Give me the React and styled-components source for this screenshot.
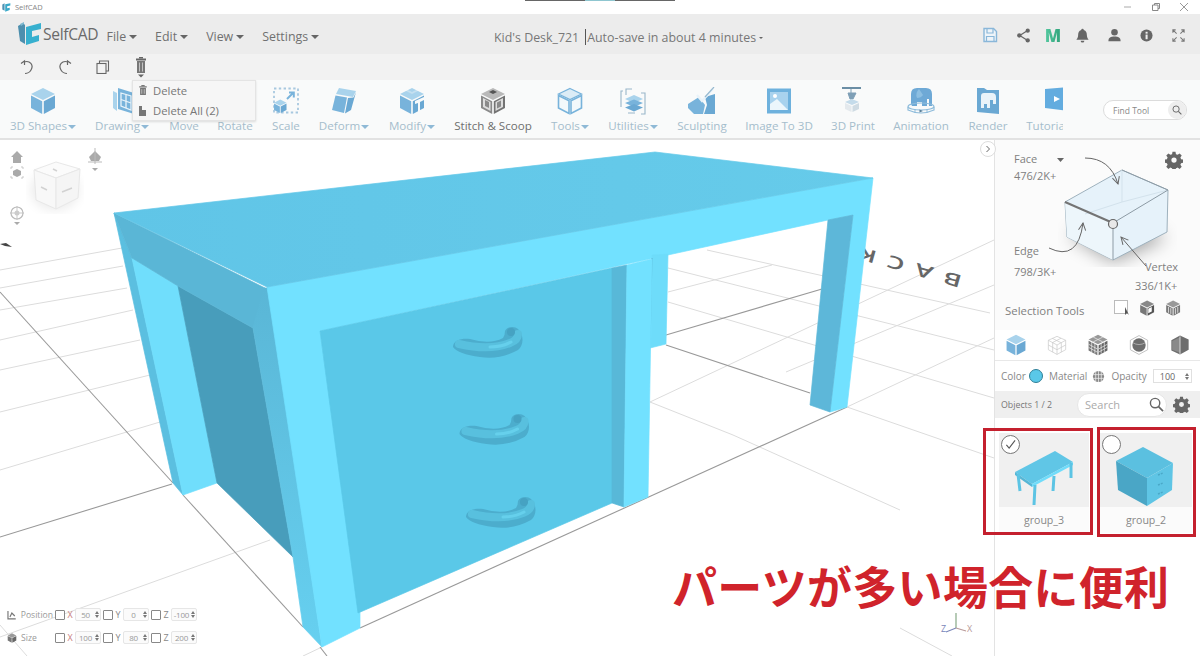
import React from "react";
import styled, { createGlobalStyle } from "styled-components";

const Global = createGlobalStyle`
  html, body { margin: 0; padding: 0; background: #fff; }
  body { font-family: "Open Sans", "Noto Sans", sans-serif; overflow: hidden; }
  #root { width: 1200px; height: 656px; }
  * { box-sizing: border-box; }
`;

const Page = styled.div`
  position: relative; width: 1200px; height: 656px; overflow: hidden;
  display: flex; flex-direction: column; background: #fff; color: #666;
`;
const TitleBar = styled.div`
  position: relative; height: 14px; flex: none; display: flex; align-items: center; padding-left: 2px; gap: 4px; background: #fff;
  &::before { content: ""; position: absolute; left: 525px; top: 0; width: 150px; height: 1px;
    background: linear-gradient(90deg, #666 0 40%, #8fc6d0 40% 60%, #666 60%); }
`;
const WinTitle = styled.span` font-size: 7.5px; color: #888; `;
const WinControls = styled.div` margin-left: auto; display: flex; align-items: center; gap: 18px; padding-right: 11px; `;
const MenuBar = styled.div`
  height: 40px; flex: none; background: #ececec; display: flex; align-items: center; position: relative; padding: 4px 0 0 18px;
`;
const Logo = styled.div` display: flex; align-items: center; gap: 1px; width: 88.500px; font-size: 15.6px; letter-spacing: -0.3px; color: #6a6a6a; margin-top: -4px; `;
const Menu = styled.div` display: flex; gap: 18px; font-size: 12.4px; color: #707070; `;
const MenuItem = styled.span` display: inline-flex; align-items: center; gap: 3px; `;
const Caret = styled.i`
  display: inline-block; width: 0; height: 0; margin-top: 1px;
  border-left: ${p => p.$s || 4}px solid transparent; border-right: ${p => p.$s || 4}px solid transparent;
  border-top: ${p => p.$s || 4}px solid ${p => p.$c || "#666"};
`;
const DocTitle = styled.div`
  position: absolute; left: 494px; top: 3px; height: 40px; display: flex; align-items: center; font-size: 12.4px; color: #777;
`;
const Sep = styled.span` width: 1px; height: 16px; background: #555; margin: 0 1px 0 6px; `;
const HeaderIcons = styled.div`
  position: absolute; left: 974px; top: 1px; height: 40px; display: grid; grid-template-columns: 32px 34px 26px 32px 32px 32px 32px; align-items: center; justify-items: center;
`;
const MLogo = styled.span`
  font-size: 17px; font-weight: 800; line-height: 1; background: linear-gradient(90deg, #55c9a0, #2fa27a); -webkit-background-clip: text; background-clip: text; color: transparent;
`;
const SubBar = styled.div`
  height: 26px; flex: none; background: #f2f2f2; display: grid; grid-template-columns: repeat(4, 38px); align-items: center; justify-items: center; padding-left: 8px; justify-content: start;
`;
const Ribbon = styled.div`
  height: 60px; flex: none; background: #f9fafa; border-bottom: 2px solid #e2e2e2; display: flex; position: relative;
`;
const ToolList = styled.div` width: 1063px; padding-left: 5px; display: flex; overflow: hidden; flex: none; `;
const Tool = styled.div`
  flex: none; width: ${p => p.$w}px; display: flex; flex-direction: column; align-items: center; padding-top: 7px; white-space: nowrap;
`;
const ToolIcon = styled.div` height: 28px; width: 28px; margin-bottom: 4px; margin-left: ${p => p.$shift || 0}px; flex: none; `;
const ToolLabel = styled.div`
  font-size: 11.6px; line-height: 14px; color: ${p => p.$dark ? "#6f6f6f" : "#a5bdcc"}; display: flex; align-items: center; gap: 1px;
`;
const FindTool = styled.div`
  margin: 20px 0 0 40px; width: 84px; height: 20px; border: 1px solid #dcdcdc; border-radius: 10px; background: #fff;
  display: flex; align-items: center; justify-content: space-between; padding: 0 0 0 9px; font-size: 8.5px; color: #888;
`;
const FindBtn = styled.span` width: 18px; height: 18px; border-radius: 50%; background: #eee; display: flex; align-items: center; justify-content: center; `;
const Dropdown = styled.div`
  position: absolute; left: 132px; top: 80px; width: 124px; height: 41px; background: #f6f6f6; border: 1px solid #e4e4e4; box-shadow: 0 1px 2px rgba(0,0,0,.12);
  display: flex; flex-direction: column; justify-content: center; font-size: 11.3px; color: #777; z-index: 3;
`;
const DropItem = styled.div` height: 20.500px; flex: none; display: flex; align-items: center; gap: 5px; padding-left: 5px; `;

const Main = styled.div` flex: 1; display: flex; min-height: 0; `;
const Viewport = styled.div` position: relative; width: 994px; flex: none; background: #fff; `;
const Scene = styled.svg` position: absolute; inset: 0; width: 994px; height: 516px; display: block; `;
const Toggle = styled.div`
  position: absolute; right: -2px; top: 1px; width: 16px; height: 16px; border-radius: 50%; background: #fff; border: 1px solid #ddd; display: flex; align-items: center; justify-content: center;
`;
const NavGizmo = styled.svg` position: absolute; left: 0; top: 0; width: 120px; height: 100px; `;
const Transform = styled.div` position: absolute; left: 7px; bottom: 12px; display: flex; flex-direction: column; gap: 10px; `;
const TransformRow = styled.div` display: flex; height: 13px; align-items: center; gap: 2px; font-size: 8.6px; color: #999; `;
const TransformLabel = styled.div` width: 46px; display: flex; align-items: center; gap: 4px; `;
const Axis = styled.div` display: flex; align-items: center; width: 46px; `;
const Check = styled.span` width: 10px; height: 10px; border: 1px solid #888; border-radius: 1px; background: #fff; flex: none; `;
const AxisName = styled.span` width: 10px; text-align: center; color: ${p => p.$c || "#888"}; flex: none; font-size: 9px; `;
const Spin = styled.div`
  width: 26px; height: 13px; flex: none; border: 1px solid #e6e6e6; border-radius: 2px; background: #fbfbfb; display: flex; align-items: center; padding-right: 1px; font-size: 8px; color: #999; letter-spacing: -0.2px;
`;
const SpinValue = styled.span` flex: 1; text-align: center; `;
const SpinArrows = styled.span`
  display: inline-flex; flex-direction: column; gap: 1px; flex: none;
  &::before, &::after { content: ""; width: 0; height: 0; border-left: 2.5px solid transparent; border-right: 2.5px solid transparent; }
  &::before { border-bottom: 3px solid #777; }
  &::after { border-top: 3px solid #777; }
`;

const Side = styled.aside` flex: 1; border-left: 1px solid #e3e3e3; display: flex; flex-direction: column; background: #fff; `;
const Selection = styled.section` height: 190px; flex: none; background: #fbfbfb; `;
const Diagram = styled.svg` display: block; width: 205px; height: 190px; `;
const ShapeRow = styled.div` height: 31px; flex: none; border-bottom: 1px solid #e8e8e8; display: grid; grid-template-columns: repeat(5, 41px); justify-items: center; align-items: center; `;
const PropRow = styled.div` height: 30px; flex: none; display: flex; align-items: center; padding-left: 6px; font-size: 10px; color: #888; `;
const Swatch = styled.span` width: 14px; height: 14px; border-radius: 50%; background: #5ac8e8; border: 1.5px solid #2f7f97; margin: 0 6px 0 3px; `;
const MaterialIcon = styled.span` display: block; margin: 0 6px 0 5px; `;
const Opacity = styled.div`
  width: 39px; height: 14px; margin-left: 6px; border: 1px solid #e0e0e0; display: flex; align-items: center; justify-content: space-between; padding: 0 2px 0 6px; background: #fff; font-size: 9px; color: #666;
`;
const ObjectsBar = styled.div`
  height: 27px; flex: none; background: #efefef; display: flex; align-items: center; padding-left: 6px; font-size: 8.8px; color: #777;
`;
const SearchPill = styled.div`
  width: 90px; height: 24px; margin-left: 25px; border-radius: 12px; background: #fff; border: 1px solid #e6e6e6; display: flex; align-items: center; justify-content: space-between; padding: 0 2px 0 7px; font-size: 11px; color: #aaa;
`;
const BarGear = styled.span` margin-left: 6px; `;
const Cards = styled.div` display: grid; grid-template-columns: 90px 92px; gap: 11px; padding: 15px 0 0 4px; `;
const Card = styled.div` position: relative; `;
const Thumb = styled.div` height: 74px; background: #f0f0f0; `;
const ThumbArt = styled.svg` display: block; width: 100%; height: 74px; `;
const CardName = styled.div` height: 26px; display: flex; align-items: center; justify-content: center; font-size: 10.6px; color: #888; background: #fbfbfb; `;
const Radio = styled.span`
  position: absolute; left: 2px; top: 2px; width: 19px; height: 19px; border-radius: 50%; background: #fff; border: 1px solid #777; display: flex; align-items: center; justify-content: center;
`;
const Highlight = styled.div`
  position: absolute; left: ${p => p.$x}px; top: ${p => p.$y}px; width: ${p => p.$w}px; height: ${p => p.$h}px; border: 3px solid #c4202e; z-index: 4; pointer-events: none;
`;
const Note = styled.div`
  position: absolute; left: 672px; top: 558px; font-family: "Noto Sans CJK JP", "Noto Sans", sans-serif; font-weight: 700; font-size: 45px; letter-spacing: .3px; line-height: 56px; color: #d0232b; white-space: nowrap; z-index: 4;
`;

/* ---------- tool icons ---------- */
const B1 = "#a9d3ec", B2 = "#78b3db", B3 = "#6aa8d3", G1 = "#b9b9b9", G2 = "#8a8a8a", G3 = "#737373";
const Svg = ({ s = 28, vb = "0 0 28 28", w, children, ...r }) => <svg width={w || s} height={s} viewBox={vb} style={{ display: "block" }} {...r}>{children}</svg>;

const CubeShape = ({ a = B1, b = B2, c = B3 }) => <>
  <polygon points="14,1 26,7 14,13 2,7" fill={a} />
  <polygon points="2,8.5 13.2,14.2 13.2,27 2,21" fill={b} />
  <polygon points="14.8,14.2 26,8.5 26,21 14.8,27" fill={c} />
</>;

const icons = {
  cube: <Svg><CubeShape /></Svg>,
  drawing: <Svg>
    <polygon points="5,4 9,6 9,24 5,21" fill={B1} />
    <polygon points="10,1 26,6 26,27 10,22" fill={B2} />
    <g stroke="#e8f3fa" strokeWidth="1.3" fill="none"><polygon points="13,6 23,9 23,23 13,19" /><line x1="18" y1="7.5" x2="18" y2="21" /><line x1="13" y1="12.5" x2="23" y2="16" /></g>
  </Svg>,
  none: <Svg />,
  scale: <Svg>
    <rect x="2" y="1.5" width="24" height="24" fill="none" stroke="#a8c8df" strokeWidth="1.8" strokeDasharray="2.4 2.4" />
    <g transform="translate(1 12) scale(.52)"><CubeShape /></g>
    <path d="M15 12 L21 6 M17 5.5 H21.8 V10.5" fill="none" stroke="#79b3db" strokeWidth="2" />
  </Svg>,
  deform: <Svg>
    <polygon points="9,1 26,4 23,10 6,7" fill={B1} />
    <polygon points="5.5,8.5 17,10.5 14,26 2,23" fill={B2} />
    <polygon points="18,11 23.5,10.5 26,5 21,23 15,26.5" fill={B3} />
  </Svg>,
  modify: <Svg>
    <CubeShape />
    <polygon points="17,14 26,10 26,13 22,15 22,27 20,27 20,16 17,17" fill="#f9fafa" />
    <polygon points="8,2 14,5 20,2 21,3.5 14,7 7,3.5" fill="#f9fafa" opacity=".35" />
  </Svg>,
  stitch: <Svg>
    <CubeShape a={G1} b={G2} c={G3} />
    <polygon points="4,11 11.5,15 11.5,24 4,20" fill="#ddd" />
    <polygon points="16.5,15 24,11 24,20 16.5,24" fill="#ddd" />
    <polygon points="6,13 10,15 10,21 6,19" fill={G2} />
    <polygon points="18,15.5 22,13.5 22,19.5 18,21.5" fill={G2} />
    <polygon points="14,3 18,5 14,7 10,5" fill="#555" />
  </Svg>,
  tools: <Svg>
    <polygon points="14,1.5 25.5,7 14,12.5 2.5,7" fill="#dcecf6" stroke={B2} strokeWidth="1.2" />
    <polygon points="2.5,8.5 13,13.8 13,26.5 2.5,21" fill="#f3f8fb" stroke={B2} strokeWidth="1.6" />
    <polygon points="15,13.8 25.5,8.5 25.5,21 15,26.5" fill="#f3f8fb" stroke={B2} strokeWidth="1.6" />
  </Svg>,
  utilities: <Svg>
    <path d="M7 8 V2 H13 M22 6 H26 V27 H22 M4 4 H2 V20 M9 26 H16" fill="none" stroke="#9ab6c9" strokeWidth="1.1" />
    <polygon points="15,8 24,12 15,16 6,12" fill={B1} />
    <polygon points="15,12.5 24,16 15,20 6,16" fill={B2} />
    <polygon points="15,17 24,20.5 15,24.5 6,20.5" fill={B3} />
  </Svg>,
  sculpt: <Svg>
    <polygon points="0,17 11,10 17,18 15,27 6,27 0,21" fill={B2} />
    <polygon points="17,10 27,7 27,27 16,27 19,18" fill={B3} />
    <path d="M9 8 L14 14 L25 2" fill="none" stroke="#eaf3f9" strokeWidth="2.4" />
    <path d="M17 10 L26 0" stroke="#97b9cf" strokeWidth="1.2" />
  </Svg>,
  image: <Svg>
    <rect x="2" y="1.5" width="24" height="25" fill="#6eb1dd" />
    <rect x="5" y="5" width="18" height="18" fill="#a8d2ee" />
    <polygon points="5,23 5,17 12,12 23,23" fill="#ecf6fc" />
    <circle cx="10" cy="9" r="2" fill="#fff" />
  </Svg>,
  print: <Svg>
    <rect x="3" y="0" width="19" height="2" fill="#6b8ea5" />
    <path d="M12 2 V6 M9 6 H17 L14 12 H11 Z" fill="#7e9fb6" stroke="#7e9fb6" />
    <polygon points="13,12 20,15 13,18 6,15" fill="#c4dbea" />
    <polygon points="6,16 12.5,19 12.5,25 6,22" fill="#e4e9ed" />
    <polygon points="13.5,19 20,16 20,22 13.5,25" fill="#cfdbe3" />
  </Svg>,
  animation: <Svg>
    <path d="M4 17 V7 Q4 1 10 1 H19 Q25 1 25 7 V19 H22 V12 H20 V19 H15 V15 H10 V19 H5 Z" fill="#6ea9d6" />
    <path d="M12 2 Q8 6 10 11 Q14 11 16 8 Z" fill="#8dbfe2" />
    <ellipse cx="14" cy="19.500" rx="13" ry="3.500" fill="none" stroke="#8fbcdb" strokeWidth="1.200" />
    <path d="M1 20 V23 Q14 29 27 23 V20" fill="none" stroke="#8fbcdb" strokeWidth="1.200" />
    <path d="M8 22 V26 M20 22 V26" stroke="#8fbcdb" />
    <polygon points="12.500,22.500 16,24 12.500,25.500" fill="#5a7f98" />
  </Svg>,
  render: <Svg>
    <polygon points="3,1 10,1 13,3 25,3 25,27 3,25" fill={B3} />
    <path d="M7 17 V9 Q7 6 10 6 H18 Q22 6 22 10 V17 H19 V13 H16 V21 H13 V17 H10 V21 H7 Z" fill="#e9f3f9" />
  </Svg>,
  tutorial: <Svg>
    <polygon points="0,2 24,0 24,24 0,21" fill="#63acdf" />
    <polygon points="9,9 15,12 9,15" fill="#fff" />
  </Svg>,
};

const tools = [
  ["3D Shapes", 76, "cube", 1], ["Drawing", 82, "drawing", 1], ["Move", 42, "none"], ["Rotate", 60, "none"], ["Scale", 42, "scale"],
  ["Deform", 74, "deform", 1], ["Modify", 62, "modify", 1], ["Stitch & Scoop", 100, "stitch", 0, 1], ["Tools", 54, "tools", 1],
  ["Utilities", 72, "utilities", 1], ["Sculpting", 66, "sculpt"], ["Image To 3D", 88, "image"], ["3D Print", 60, "print"],
  ["Animation", 76, "animation"], ["Render", 58, "render"], ["Tutorial", 60, "tutorial", 0, 0, 24],
];

const Trash = ({ s = 12, c = "#777" }) => <Svg s={s} vb="0 0 12 12">
  <rect x="4" y="0" width="4" height="1.5" fill={c} /><rect x="1.5" y="1.5" width="9" height="1.5" fill={c} />
  <path d="M2.5 3.5 H9.5 V12 H2.5 Z" fill={c} /><path d="M4.5 5 V10.5 M7.5 5 V10.5" stroke="#ddd" strokeWidth=".8" />
</Svg>;
const Gear = ({ s = 18, c = "#666" }) => <Svg s={s} vb="0 0 24 24">
  <path fill={c} fillRule="evenodd" d="M10 1 h4 l.6 3.2 a8 8 0 0 1 2.2 .9 l2.7-1.8 2.8 2.8 -1.8 2.7 a8 8 0 0 1 .9 2.2 l3.2 .6 v4 l-3.2 .6 a8 8 0 0 1-.9 2.2 l1.8 2.7 -2.8 2.8 -2.7-1.8 a8 8 0 0 1-2.2 .9 l-.6 3.2 h-4 l-.6-3.2 a8 8 0 0 1-2.2-.9 l-2.7 1.8 -2.8-2.8 1.8-2.7 a8 8 0 0 1-.9-2.2 l-3.2-.6 v-4 l3.2-.6 a8 8 0 0 1 .9-2.2 l-1.8-2.7 2.8-2.8 2.7 1.8 a8 8 0 0 1 2.2-.9z M12 8.5 a3.5 3.5 0 1 0 0 7 a3.5 3.5 0 0 0 0-7z" />
</Svg>;
const Mag = ({ s = 13, c = "#666" }) => <Svg s={s} vb="0 0 16 16"><circle cx="6.5" cy="6.5" r="5" fill="none" stroke={c} strokeWidth="1.5" /><line x1="10.2" y1="10.2" x2="15" y2="15" stroke={c} strokeWidth="1.8" /></Svg>;

/* ---------- scene ---------- */
const light = [
  [0,270,122,248],[0,288,123,266],[0,310,127,288],[0,340,133,310],[0,370,140,340],[0,412,150,375],[0,470,160,422],
  [0,637,270,540],[0,625,27,656],[303,656,322,647],
  [707,250,990,313],[668,268,994,350],[668,302,994,398],[650,402,733,435],[733,435,900,510],[847,407,994,458],
  [668,292,772,265],[650,402,994,240],[786,372,994,285],[847,407,994,338],[900,628,952,656],[350,600,420,570],
];
const dark = [[0,537,172,484],[0,292,173,483],[183,495,303,627],[320,647,327,656],[360,628,847,407],[666,345,810,393],[666,335,822,289]];

const P = ({ points, fill }) => <polygon points={points} fill={fill} stroke={fill} strokeWidth=".7" />;

const handle = (dx, dy, k) => <g key={k} transform={`translate(${dx} ${dy})`}>
  <path d="M453 347 C453 340 462 338 470 339 Q490 345 503 338 Q505 335 505 331 C507 326 515 326 518 329 C524 335 524 345 518 350 Q500 360 480 357 Q458 354 453 347 Z" fill="#4cadcd" />
  <path d="M459 344 Q490 351 510 343 Q518 340 518 334" fill="none" stroke="#58c0de" strokeWidth="8" strokeLinecap="round" />
  <path d="M490 347 Q502 347 511 342" fill="none" stroke="#66d0ec" strokeWidth="3" strokeLinecap="round" />
  <circle cx="511" cy="332" r="4" fill="#46a2c2" />
</g>;

const DeskScene = () => <Scene viewBox="0 140 994 516">
  <defs>
    <linearGradient id="tp" x1="0" x2="1" y1="0" y2="0"><stop offset="0" stopColor="#60c5e7" /><stop offset="1" stopColor="#66cbea" /></linearGradient>
    <linearGradient id="st" x1="0" x2="0" y1="0" y2="1"><stop offset="0" stopColor="#5ab6d6" /><stop offset="1" stopColor="#66d0f0" /></linearGradient>
  </defs>
  {light.map((l, i) => <line key={i} x1={l[0]} y1={l[1]} x2={l[2]} y2={l[3]} stroke="#dcdcdc" strokeWidth="1" />)}
  {dark.map((l, i) => <line key={i} x1={l[0]} y1={l[1]} x2={l[2]} y2={l[3]} stroke="#999" strokeWidth="1.1" />)}
  <path d="M0 244 L6 243 L12 247 L5 246Z" fill="#444" />
  <text transform="translate(963 276) rotate(196) scale(1.15 .72)" fontFamily="Open Sans" fontWeight="600" fontSize="24" letterSpacing="10" fill="#666">BACK</text>

  <P points="114,213 132,258 183,495 173,483" fill="#5bbfe0" />
  <P points="132,258 178,286 217,483 183,495" fill="#70defc" />
  <P points="178,286 253,328 293,557 217,483" fill="#489dbb" />
  <P points="114,213 265,288 272,345 253,328 178,286 132,258" fill="#5ab6d6" />
  <P points="264,288 269,288 322,647 303,627 293,557 253,328" fill="url(#st)" />

  <P points="267,287 873,178 847,407 830,412 853,215 828,220 320,331 360,613 360,628 322,647" fill="#72e1ff" />
  <P points="828,220 853,215 830,412 810,405" fill="#5db7d9" />
  <P points="652,255 668,254 666,344 650,348" fill="#6edcfa" />
  <line x1="652" y1="258" x2="650" y2="348" stroke="#58b6d4" strokeWidth="1" />
  <P points="114,213 655,152 873,178 267,287" fill="url(#tp)" />
  <P points="320,331 612,268 612,503 358,613" fill="#5ac8e8" />
  <P points="612,268 627,265 624,507 612,503" fill="#58b8d8" />
  <P points="627,265 652,259 648,497 624,507" fill="#72e1ff" />
  {handle(0, 0, "a")}{handle(6.5, 87, "b")}{handle(13, 170, "c")}
  <g fontFamily="Open Sans" fontSize="9">
    <g transform="translate(944 628)" strokeWidth="1.1" fill="none">
      <line x1="12" y1="0" x2="12" y2="-15" stroke="#7ba07b" />
      <line x1="12" y1="0" x2="2" y2="4" stroke="#7a86b8" />
      <line x1="12" y1="0" x2="22" y2="3" stroke="#b89a9a" />
    </g>
    <text x="941" y="632" fill="#7a86b8">Z</text><text x="967" y="632" fill="#b89a9a">X</text>
  </g>
</Scene>;

const Gizmo = () => <NavGizmo viewBox="0 0 120 100">
  <defs><filter id="bl"><feGaussianBlur stdDeviation="6" /></filter></defs>
  <ellipse cx="55" cy="50" rx="24" ry="20" fill="#000" opacity=".08" filter="url(#bl)" />
  <polygon points="34,30 56,22 80,29 56,38" fill="#fbfbfb" stroke="#e8e8e8" />
  <polygon points="34,30 56,38 56,69 36,60" fill="#f8f8f8" stroke="#e8e8e8" />
  <polygon points="56,38 80,29 78,58 56,69" fill="#f5f5f5" stroke="#e8e8e8" />
  <path d="M41 47 L47 50 M62 52 L72 48 M53 29 L57 31" stroke="#d2d2d2" strokeWidth="1.5" />
  <path d="M17 11 L11 17 H13 V23 H21 V17 H23 Z" fill="#aaa" />
  <path d="M11 29 V27 H13 M21 27 H23 V29 M23 36 V38 H21 M13 38 H11 V36" fill="none" stroke="#bbb" strokeWidth=".8" />
  <polygon points="17,29 21,31 21,35 17,37 13,35 13,31" fill="#aaa" />
  <polygon points="95,11 101,17 99,21 91,21 89,17" fill="#aaa" /><path d="M95 8 V24 M88 22 L102 22" stroke="#bbb" />
  <polygon points="92,28 98,28 95,31" fill="#aaa" />
  <circle cx="17" cy="73" r="6" fill="none" stroke="#bbb" strokeWidth="1.2" /><path d="M17 66 V80 M10 73 H24" stroke="#bbb" strokeWidth=".8" /><circle cx="17" cy="73" r="2.5" fill="#ccc" />
  <polygon points="14,82 20,82 17,85" fill="#aaa" />
</NavGizmo>;

const SelDiagram = () => <Diagram viewBox="995 140 205 190">
  <defs>
    <filter id="bs"><feGaussianBlur stdDeviation="9" /></filter>
    <marker id="ah" viewBox="0 0 10 10" refX="9" refY="5" markerWidth="9" markerHeight="9" orient="auto"><path d="M1 1 L9 5 L1 9" fill="none" stroke="#666" strokeWidth="1.1" /></marker>
  </defs>
  <polygon points="1068,235 1113,262 1167,238 1120,215" fill="#000" opacity=".35" filter="url(#bs)" />
  <polygon points="1065,202 1122,170 1168,190 1167,232 1113,260 1067,237" fill="#e6f2fa" stroke="#9eb1bd" />
  <polygon points="1065,202 1113,223 1113,260 1067,237" fill="#edf6fb" />
  <path d="M1122 170 V202 M1122 202 L1168 190 M1122 202 L1085 214" stroke="#d3e2ec" fill="none" />
  <path d="M1122 170 L1168 190 L1113 223 M1113 223 V260" stroke="#8d9ba5" fill="none" />
  <line x1="1065" y1="202" x2="1113" y2="223" stroke="#747474" strokeWidth="2" />
  <circle cx="1113" cy="224" r="4.5" fill="#e8e8e8" stroke="#666" strokeWidth="1.2" />
  <path d="M1085 158 Q1110 158 1118 184" stroke="#666" fill="none" markerEnd="url(#ah)" />
  <path d="M1049 248 Q1078 262 1083 223" stroke="#666" fill="none" markerEnd="url(#ah)" />
  <path d="M1146 266 L1121 237" stroke="#666" fill="none" markerEnd="url(#ah)" />
  <g fontFamily="Open Sans" fontSize="11" fill="#808080">
    <text x="1014" y="163">Face</text><text x="1014" y="180">476/2K+</text>
    <text x="1014" y="255">Edge</text><text x="1014" y="276">798/3K+</text>
    <text x="1145" y="271">Vertex</text><text x="1135" y="290">336/1K+</text>
    <text x="1005" y="315" fontSize="11.4">Selection Tools</text>
  </g>
  <polygon points="1057,158 1064,158 1060.5,162" fill="#666" />
  <g transform="translate(1165 151)"><Gear /></g>
  <rect x="1114.5" y="300.5" width="13" height="13" fill="#fff" stroke="#bbb" />
  <path d="M1125 307 L1125 315 L1127 313 L1129 315 Z" fill="#555" />
  <g transform="translate(1139 300) scale(.58)"><CubeShape a="#888" b="#777" c="#555" /><polygon points="16,15 22,12 22,20 16,23" fill="#fff" /></g>
  <g transform="translate(1165 300) scale(.58)"><CubeShape a="#999" b="#777" c="#777" /><path d="M6 12 V22 M10 14 V24 M18 14 V24 M22 12 V22" stroke="#fff" strokeWidth="1.2" /></g>
</Diagram>;

const shapeIcons = [
  <CubeShape />,
  <g fill="none" stroke="#c9c9c9" strokeWidth=".9"><polygon points="14,3 25,8 25,20 14,26 3,20 3,8" /><path d="M3 8 L14 14 L25 8 M14 14 V26 M8 5.5 L19 11 M19 5.5 L8 11 M3 14 L14 20 L25 14 M8.500 11 V23 M19.500 11 V23" /></g>,
  <><CubeShape a="#999" b="#777" c="#666" /><g stroke="#eee" strokeWidth=".9" fill="none"><path d="M6 10 V23 M10 12 V25 M18 12 V25 M22 10 V23 M2 13 L13 19 M2 17 L13 23 M15 19 L26 13 M15 23 L26 17 M8 4 L20 10 M20 4 L8 10" /></g></>,
  <><polygon points="14,2 25,8 25,20 14,26 3,20 3,8" fill="none" stroke="#aaa" strokeWidth=".9" /><circle cx="14" cy="14" r="8.5" fill="#6d6d6d" /><path d="M6 11 Q14 16 22 11" stroke="#ddd" fill="none" strokeWidth=".7" /></>,
  <><polygon points="14,2 25,7 25,20 14,26 3,21 3,8" fill="#6e6e6e" /><polygon points="14,4 14,24 4,20 4,9" fill="#8a8a8a" /><path d="M14 3 V26" stroke="#eee" strokeWidth="1" /></>,
];

const axes = (a, b, c) => [["X", a, "#c98080"], ["Y", b, "#888"], ["Z", c, "#888"]];

const TRow = ({ icon, label, vals }) => <TransformRow>
  <TransformLabel>{icon}{label}</TransformLabel>
  {vals.map(([n, v, col]) => <Axis key={n}><Check /><AxisName $c={col}>{n}</AxisName><Spin><SpinValue>{v}</SpinValue><SpinArrows /></Spin></Axis>)}
</TransformRow>;

export default function App() {
  return <>
    <Global />
    <Page>
      <TitleBar>
        <Svg s={9} vb="0 0 28 28"><polygon points="1,5 8,1 8,24 1,20" fill="#4e93b4" /><path d="M10 4 L26 1 V8 L16 10 V16 L24 15 V22 L10 27 Z" fill="#39a9c9" /></Svg>
        <WinTitle>SelfCAD</WinTitle>
        <WinControls>
          <Svg s={10} vb="0 0 10 10"><line x1="1" y1="5" x2="8" y2="5" stroke="#aaa" /></Svg>
          <Svg s={10} vb="0 0 10 10"><path d="M1.500 3 H7 V8.500 H1.500Z M3.500 3 V1.500 H8.500 V6.500 H7" fill="none" stroke="#888" /></Svg>
          <Svg s={10} vb="0 0 10 10"><path d="M1 1 L9 9 M9 1 L1 9" stroke="#999" /></Svg>
        </WinControls>
      </TitleBar>
      <MenuBar>
        <Logo>
          <Svg s={24} vb="0 0 24 24">
            <polygon points="0,4 5,1 7,3 7,22 2,19" fill="#4d8fae" />
            <polygon points="2,2 6,0 6,2 3,4" fill="#7fb9d0" />
            <path d="M8 5 L23 1 V7 L14 9 V15 L21 13 V19 L8 23 Z" fill="#37b0cf" />
          </Svg>
          SelfCAD
        </Logo>
        <Menu>
          {["File", "Edit", "View", "Settings"].map(m => <MenuItem key={m}>{m}<Caret /></MenuItem>)}
        </Menu>
        <DocTitle>Kid's Desk_721<Sep />Auto-save in about 4 minutes&nbsp;<Caret $s={2.5} /></DocTitle>
        <HeaderIcons>
          <Svg s={16} vb="0 0 16 16"><path d="M2 1.500 H11.500 L14.500 4.500 V14.500 H2 Z" fill="#eef4f9" stroke="#8ab7d9" strokeWidth="1.4" /><path d="M5 2 V6 H11 V2 M4.500 14 V9.500 H12 V14" fill="none" stroke="#8ab7d9" strokeWidth="1.2" /></Svg>
          <Svg s={15} vb="0 0 16 16"><path d="M12 3 L4 8 L12 13" stroke="#666" strokeWidth="1.3" fill="none" /><circle cx="12.500" cy="2.800" r="2.300" fill="#666" /><circle cx="3.500" cy="8" r="2.300" fill="#666" /><circle cx="12.500" cy="13.200" r="2.300" fill="#666" /></Svg>
          <MLogo>M</MLogo>
          <Svg s={15} vb="0 0 16 16"><path d="M8 .8 a1.300 1.300 0 0 1 1.300 1.400 C12 3 12.600 5 12.700 8 C12.800 10.500 14 11.500 14.500 12.500 H1.500 C2 11.500 3.200 10.500 3.300 8 C3.400 5 4 3 6.700 2.200 A1.300 1.300 0 0 1 8 .8z M6 13.500 H10 A2 2 0 0 1 6 13.500z" fill="#666" /></Svg>
          <Svg s={15} vb="0 0 16 16"><circle cx="8" cy="4.500" r="3.500" fill="#666" /><path d="M1.500 14 C1.500 10 4 9 8 9 C12 9 14.500 10 14.500 14Z" fill="#666" /></Svg>
          <Svg s={13} vb="0 0 14 14"><circle cx="7" cy="7" r="6.500" fill="#666" /><rect x="6" y="6" width="2.200" height="5" fill="#eee" /><rect x="6" y="3" width="2.200" height="2" fill="#eee" /></Svg>
          <Svg s={15} vb="0 0 16 16"><g stroke="#777" strokeWidth="1.1" fill="none"><path d="M6 6 L2 2 M2 5 V2 H5 M10 6 L14 2 M11 2 H14 V5 M6 10 L2 14 M2 11 V14 H5 M10 10 L14 14 M11 14 H14 V11" /></g></Svg>
        </HeaderIcons>
      </MenuBar>
      <SubBar>
        <Svg s={16} vb="0 0 16 16"><path d="M5 3 C11 1 15 6 12 11 C11 13 8 14.500 6 14.500 M2 4.500 L5.500 2 L5.500 6" fill="none" stroke="#666" strokeWidth="1.200" /></Svg>
        <Svg s={16} vb="0 0 16 16"><path d="M11 3 C5 1 1 6 4 11 C5 13 8 14.500 10 14.500 M14 4.500 L10.500 2 L10.500 6" fill="none" stroke="#666" strokeWidth="1.200" /></Svg>
        <Svg s={14} vb="0 0 14 14"><rect x="1" y="3.500" width="9" height="10" fill="#f2f2f2" stroke="#666" strokeWidth="1.100" /><path d="M3.500 3.500 V1 H12.500 V11 H10" fill="none" stroke="#666" strokeWidth="1.100" /></Svg>
        <Svg s={21} w={12} vb="0 0 12 21">
          <rect x="4" y="0" width="4" height="1.500" fill="#666" /><rect x="1" y="1.500" width="10" height="2" fill="#666" />
          <path d="M2 4 H10 V16 H2 Z" fill="#777" /><path d="M4.500 5.500 V14.500 M7.500 5.500 V14.500" stroke="#ccc" strokeWidth=".9" />
          <polygon points="3,17.500 9,17.500 6,20.500" fill="#666" />
        </Svg>
      </SubBar>
      <Ribbon>
        <ToolList>
          {tools.map(([name, w, ic, caret, dk, shift]) => <Tool key={name} $w={w}>
            <ToolIcon $shift={shift}>{icons[ic]}</ToolIcon>
            <ToolLabel $dark={dk}>{name}{caret ? <Caret $c="#8fb9d6" /> : null}</ToolLabel>
          </Tool>)}
        </ToolList>
        <FindTool>Find Tool<FindBtn><Mag s={10} /></FindBtn></FindTool>
      </Ribbon>
      <Dropdown>
        <DropItem><Trash s={10} />Delete</DropItem>
        <DropItem><Svg s={10} vb="0 0 10 10"><path d="M1 0 H4 V4 H8 V10 H1Z" fill="#777" /></Svg>Delete All (2)</DropItem>
      </Dropdown>
      <Main>
        <Viewport>
          <DeskScene />
          <Gizmo />
          <Toggle><Svg s={8} vb="0 0 8 8"><path d="M2.500 1 L5.500 4 L2.500 7" fill="none" stroke="#666" strokeWidth="1" /></Svg></Toggle>
          <Transform>
            <TRow label="Position" icon={<Svg s={10} vb="0 0 10 10"><path d="M1 1 V9 H9 M3 7 L5 3 L8 6" fill="none" stroke="#777" strokeWidth="1.200" /></Svg>} vals={axes("50", "0", "-100")} />
            <TRow label="Size" icon={<Svg s={10} vb="0 0 28 28"><CubeShape a="#999" b="#777" c="#666" /></Svg>} vals={axes("100", "80", "200")} />
          </Transform>
        </Viewport>
        <Side>
          <Selection><SelDiagram /></Selection>
          <ShapeRow>{shapeIcons.map((s, i) => <Svg key={i} s={22}>{s}</Svg>)}</ShapeRow>
          <PropRow>
            Color<Swatch />Material
            <MaterialIcon><Svg s={13} vb="0 0 14 14"><circle cx="7" cy="7" r="6" fill="#888" /><path d="M1 5 H13 M1 9 H13 M4 1.500 V12.500 M10 1.500 V12.500 M7 1 V13" stroke="#eee" strokeWidth=".8" /></Svg></MaterialIcon>
            Opacity<Opacity>100<SpinArrows /></Opacity>
          </PropRow>
          <ObjectsBar>
            Objects 1 / 2
            <SearchPill>Search<Mag s={15} /></SearchPill>
            <BarGear><Gear s={17} /></BarGear>
          </ObjectsBar>
          <Cards>
            <Card>
              <Thumb><ThumbArt viewBox="999 433 90 74">
                <polygon points="1015,472 1055,451 1073,462 1032,484" fill="#60c6e6" />
                <polygon points="1015,472 1032,484 1032,487 1015,475" fill="#56b6d5" />
                <polygon points="1032,484 1073,462 1073,465 1032,487" fill="#70dcfa" />
                <path d="M1018 474 L1020 491 M1035 485 L1034 505 M1054 476 L1053 491 M1071 463 L1071 478" stroke="#5cc4e4" strokeWidth="3" />
              </ThumbArt></Thumb>
              <CardName>group_3</CardName>
              <Radio><Svg s={11} vb="0 0 12 12"><path d="M1.500 6.500 L4.500 10 L11 1.500" fill="none" stroke="#555" strokeWidth="1.200" /></Svg></Radio>
            </Card>
            <Card>
              <Thumb><ThumbArt viewBox="1100 433 92 74">
                <polygon points="1116,461 1143,447 1173,463 1147,478" fill="#5bc0e0" />
                <polygon points="1116,461 1147,478 1147,506 1118,490" fill="#4aa6c6" />
                <polygon points="1147,478 1173,463 1172,490 1147,506" fill="#5fc5e5" />
                <path d="M1158 475 L1163 473 M1158 485 L1163 483 M1158 494 L1163 492" stroke="#4aa8c8" strokeWidth="1.500" strokeDasharray="2 1" />
              </ThumbArt></Thumb>
              <CardName>group_2</CardName>
              <Radio />
            </Card>
          </Cards>
        </Side>
      </Main>
      <Highlight $x={983} $y={428} $w={110} $h={107} />
      <Highlight $x={1097} $y={427} $w={99} $h={110} />
      <Note>パーツが多い場合に便利</Note>
    </Page>
  </>;
}
